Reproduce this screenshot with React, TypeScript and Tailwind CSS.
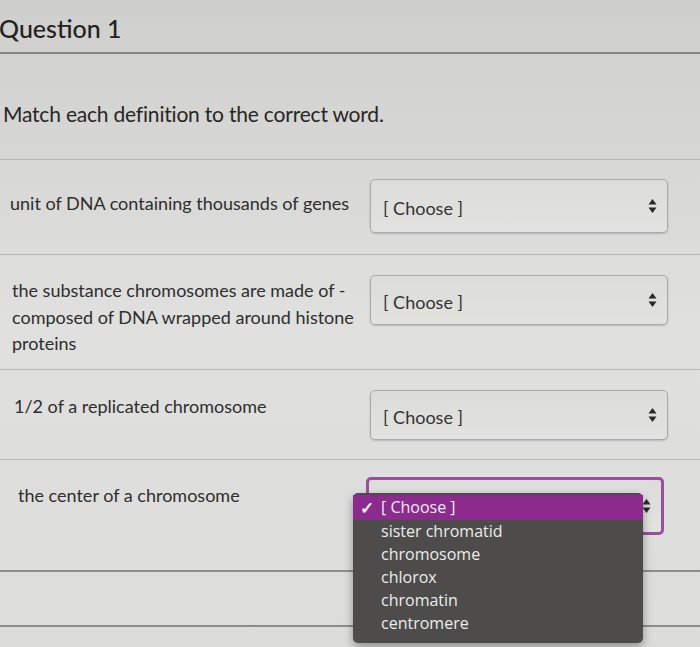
import React from "react";

function Arrows() {
  return (
    <svg width="9" height="16" viewBox="0 0 9 16" className="shrink-0">
      <path d="M4.5 1 L8.5 6.5 L0.5 6.5 Z" fill="#2a2a2a" />
      <path d="M4.5 15 L8.5 9.5 L0.5 9.5 Z" fill="#2a2a2a" />
    </svg>
  );
}

function SelectBox({ h, mt, focus }: { h: string; mt: string; focus?: boolean }) {
  return (
    <div
      className={`${mt} ${h} w-[298px] rounded-[5px] flex items-center justify-between pl-[12px] pr-[10px] bg-gradient-to-b from-[#dcdcda] to-[#e2e2df] ${
        focus
          ? "border-[3px] border-[#9a4f9e]"
          : "border border-[#a9a9a7] shadow-[0_1px_2px_rgba(0,0,0,0.18)]"
      }`}
    >
      <span className="text-[18px] text-[#333] pt-[4px]">{focus ? "" : "[ Choose ]"}</span>
      <Arrows />
    </div>
  );
}

export default function App() {
  const items = ["sister chromatid", "chromosome", "chlorox", "chromatin", "centromere"];
  return (
    <div
      className="relative w-[700px] h-[647px] overflow-hidden bg-gradient-to-b from-[#cfcfcd] via-[#e0e0de] to-[#dcdcda] text-[#2e2e2e]"
      style={{ fontFamily: "Lato, 'Noto Sans', sans-serif" }}
    >
      <div className="h-[54px] border-b-[2px] border-[#858583] pt-[12px]">
        <div className="text-[25px] leading-[32px] font-medium text-[#222] -ml-[1px]">Question 1</div>
      </div>
      <div className="h-[106px] border-b border-[#b5b5b3] pt-[46px] pl-[3px]">
        <div className="text-[21px] leading-[28px] text-[#262626] tracking-[-0.2px]">
          Match each definition to the correct word.
        </div>
      </div>

      <div className="h-[95px] border-b border-[#b5b5b3] flex">
        <div className="w-[370px] pl-[10px] pt-[30px] text-[18px] leading-[26px]">
          unit of DNA containing thousands of genes
        </div>
        <SelectBox h="h-[54px]" mt="mt-[19px]" />
      </div>

      <div className="h-[115px] border-b border-[#b5b5b3] flex">
        <div className="w-[370px] pl-[12px] pr-[10px] pt-[22px] text-[18px] leading-[26.5px]">
          the substance chromosomes are made of - composed of DNA wrapped around histone proteins
        </div>
        <SelectBox h="h-[50px]" mt="mt-[20px]" />
      </div>

      <div className="h-[90px] border-b border-[#b5b5b3] flex">
        <div className="w-[370px] pl-[14px] pt-[23px] text-[18px] leading-[26px]">
          1/2 of a replicated chromosome
        </div>
        <SelectBox h="h-[50px]" mt="mt-[20px]" />
      </div>

      <div className="h-[112px] border-b-[2px] border-[#8c8c8a] flex">
        <div className="w-[366px] pl-[18px] pt-[22px] text-[18px] leading-[26px]">
          the center of a chromosome
        </div>
        <SelectBox h="h-[58px]" mt="mt-[17px]" focus />
      </div>

      <div className="h-[55px] border-b-[2px] border-[#8c8c8a]" />

      <div
        className="absolute left-[353px] top-[493px] w-[290px] h-[150px] rounded-[5px] bg-[#4d4c4b] shadow-[0_4px_10px_rgba(0,0,0,0.35)] pt-[2px] text-[#ececec]"
        style={{ fontFamily: "'Open Sans', 'Liberation Sans', sans-serif" }}
      >
        <div className="h-[25px] bg-[#8b2b8d] flex items-center pl-[7px] text-[16px] font-medium leading-[23px]">
          <span className="w-[21px] text-[17px] font-bold">✓</span>
          <span>[ Choose ]</span>
        </div>
        {items.map((t) => (
          <div key={t} className="h-[23px] pl-[28px] flex items-center text-[16px] font-medium leading-[23px]">
            {t}
          </div>
        ))}
      </div>
    </div>
  );
}
